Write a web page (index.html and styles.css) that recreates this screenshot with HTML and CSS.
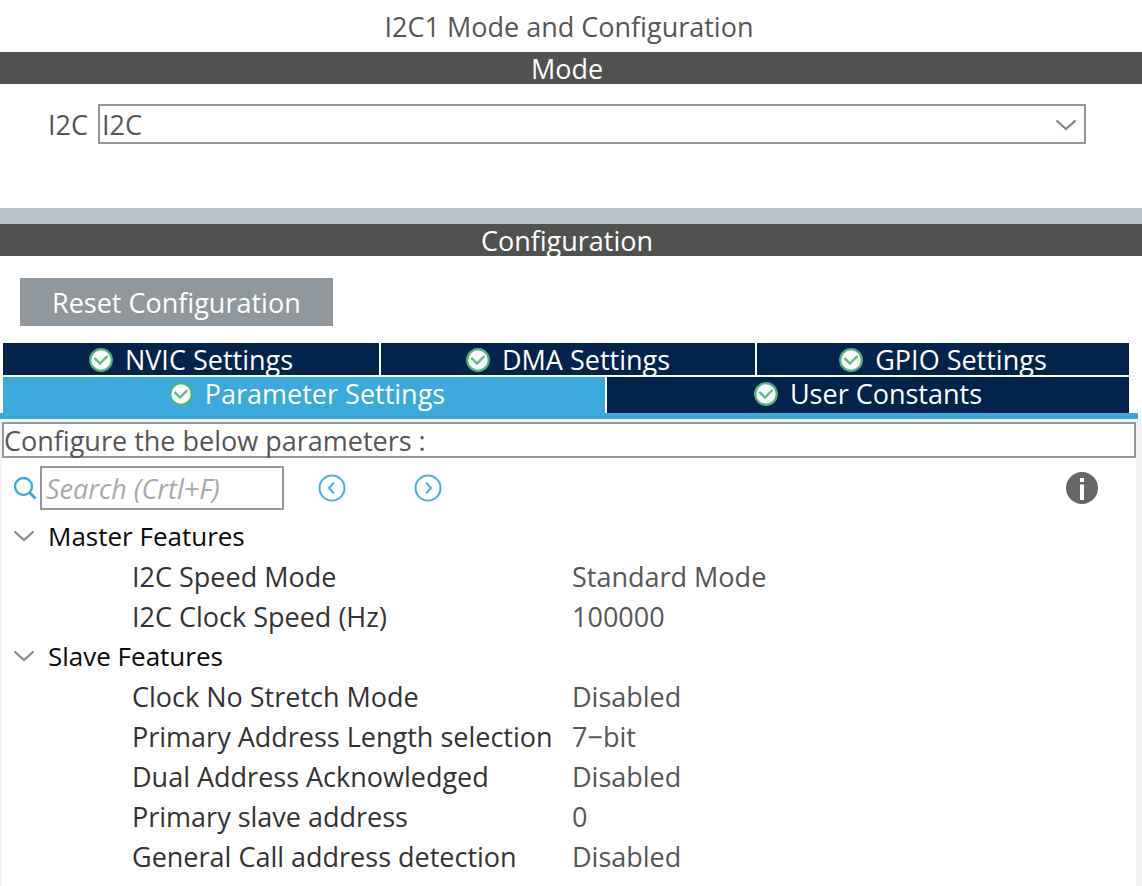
FILE: index.html
```html
<!DOCTYPE html>
<html lang="en">
<head>
<meta charset="utf-8">
<title>I2C1 Mode and Configuration</title>
<link rel="stylesheet" href="styles.css">
</head>
<body>
<svg class="defs" aria-hidden="true">
  <symbol id="check" viewBox="0 0 24 24">
    <circle cx="12" cy="12" r="10.8" fill="#fff" stroke="#4fb477" stroke-width="2.2"/>
    <path d="M5.500 10l5.500 5.500 7.500-7.500" fill="none" stroke="#5cba82" stroke-width="2.4"/>
  </symbol>
  <symbol id="chevron" viewBox="0 0 20 12">
    <path d="M.5 1.500l9.500 8.500 9.500-8.500" fill="none" stroke="#858585" stroke-width="2.2"/>
  </symbol>
</svg>
<h1 class="title">I2C1 Mode and Configuration</h1>
<section>
  <h2 class="bar">Mode</h2>
  <div class="mode">
    <label for="i2c">I2C</label>
    <div class="combo">
      <select id="i2c"><option>I2C</option><option>Disable</option></select>
      <svg class="chevron combo-arrow" aria-hidden="true"><use href="#chevron"/></svg>
    </div>
  </div>
</section>
<div class="splitter"></div>
<section class="configuration">
  <h2 class="bar">Configuration</h2>
  <button class="reset" type="button">Reset Configuration</button>
  <div class="tabs" role="tablist">
    <div class="tab-row tab-row-back">
      <button class="tab" type="button" role="tab"><svg class="check" aria-hidden="true"><use href="#check"/></svg>NVIC Settings</button>
      <button class="tab" type="button" role="tab"><svg class="check" aria-hidden="true"><use href="#check"/></svg>DMA Settings</button>
      <button class="tab" type="button" role="tab"><svg class="check" aria-hidden="true"><use href="#check"/></svg>GPIO Settings</button>
    </div>
    <div class="tab-row tab-row-front">
      <button class="tab active" type="button" role="tab" aria-selected="true"><svg class="check" aria-hidden="true"><use href="#check"/></svg>Parameter Settings</button>
      <button class="tab" type="button" role="tab"><svg class="check" aria-hidden="true"><use href="#check"/></svg>User Constants</button>
    </div>
  </div>
  <div class="strip"></div>
  <div class="panel">
    <p class="hint">Configure the below parameters :</p>
    <div class="toolbar">
      <label class="search-icon" for="search" aria-label="Search">
        <svg viewBox="0 0 24 24"><circle cx="10.500" cy="10.500" r="8.500" fill="none" stroke="#3ba9dc" stroke-width="2.4"/><path d="M16.500 16.500l6 6" stroke="#3ba9dc" stroke-width="3"/></svg>
      </label>
      <input class="search" id="search" type="text" placeholder="Search (Crtl+F)">
      <button class="step" type="button" aria-label="Previous">
        <svg viewBox="0 0 28 28" fill="none" stroke="#45b0e0" stroke-width="2"><circle cx="14" cy="14" r="12.500"/><path d="M16 8.500l-5 5.500 5 5.500"/></svg>
      </button>
      <button class="step" type="button" aria-label="Next">
        <svg viewBox="0 0 28 28" fill="none" stroke="#45b0e0" stroke-width="2"><circle cx="14" cy="14" r="12.500"/><path d="M12 8.500l5 5.500-5 5.500"/></svg>
      </button>
      <button class="info" type="button" aria-label="Information">
        <svg viewBox="0 0 32 32"><circle cx="16" cy="16" r="16" fill="#666"/><path d="M14 6h4v4h-4zM14 12.500h4V28h-4z" fill="#fff"/></svg>
      </button>
    </div>
    <table class="params">
      <tbody>
        <tr><th class="group" colspan="2"><button class="fold" type="button" aria-expanded="true"><svg class="chevron" aria-hidden="true"><use href="#chevron"/></svg>Master Features</button></th></tr>
        <tr><th>I2C Speed Mode</th><td>Standard Mode</td></tr>
        <tr><th>I2C Clock Speed (Hz)</th><td>100000</td></tr>
      </tbody>
      <tbody>
        <tr><th class="group" colspan="2"><button class="fold" type="button" aria-expanded="true"><svg class="chevron" aria-hidden="true"><use href="#chevron"/></svg>Slave Features</button></th></tr>
        <tr><th>Clock No Stretch Mode</th><td>Disabled</td></tr>
        <tr><th>Primary Address Length selection</th><td>7−bit</td></tr>
        <tr><th>Dual Address Acknowledged</th><td>Disabled</td></tr>
        <tr><th>Primary slave address</th><td>0</td></tr>
        <tr><th>General Call address detection</th><td>Disabled</td></tr>
      </tbody>
    </table>
  </div>
</section>
</body>
</html>
```
FILE: styles.css
```css
* { box-sizing: border-box; }
body {
  display: flex;
  flex-direction: column;
  min-height: 100vh;
  margin: 0;
  background: #fff;
  color: #565656;
  font: 27px/32px "Open Sans", "Noto Sans", sans-serif;
}
button, input, select {
  font: inherit;
  color: inherit;
  margin: 0;
  padding: 0;
  border: 0;
  border-radius: 0;
  background: none;
}
svg { display: block; }
.defs { display: none; }
h1, h2, p { margin: 0; font-size: inherit; font-weight: 400; }
.title { padding: 11px 4px 9px 0; text-align: center; }
.bar {
  background: #505250;
  color: #fff;
  padding: 2px 8px 0 0;
  line-height: 30px;
  text-align: center;
}
.mode {
  display: flex;
  align-items: center;
  gap: 10px;
  padding: 20px 56px 64px 48px;
}
.mode label { padding-top: 2px; }
.combo { position: relative; flex: 1; }
.combo select {
  display: block;
  width: 100%;
  height: 40px;
  padding: 2px 40px 0 2px;
  border: 2px solid #90979d;
  appearance: none;
}
.chevron { width: 20px; height: 12px; flex: none; }
.combo-arrow { position: absolute; right: 10px; top: 15px; pointer-events: none; }
.splitter { height: 16px; background: #b8c3ca; }
.configuration { display: flex; flex: 1; flex-direction: column; }
.reset {
  align-self: flex-start;
  margin: 22px 20px 17px;
  padding: 9px 32px 7px;
  background: #90979d;
  color: #fff;
}
.tabs { display: grid; gap: 2px; padding: 0 13px 0 3px; }
.tab-row { display: grid; gap: 2px; }
.tab-row-back { grid-template: 32px / 376fr 374fr 372fr; }
.tab-row-front { grid-template: 36px / 602fr 522fr; }
.tab {
  display: flex;
  align-items: center;
  justify-content: center;
  gap: 12px;
  padding-top: 2px;
  background: #02234b;
  color: #fff;
  line-height: 30px;
  white-space: nowrap;
}
.tab-row-front .tab { padding: 0 0 2px; }
.tab-row-front .active { padding-left: 6px; background: #3ba9dc; }
.check { width: 24px; height: 24px; flex: none; }
.strip { height: 6px; margin-right: 4px; background: #3ba9dc; }
.panel {
  flex: 1;
  border: solid #f0f2f4;
  border-width: 3px 6px 0 2px;
}
.hint { height: 36px; border: 2px solid #90979d; line-height: 34px; }
.toolbar {
  display: flex;
  align-items: center;
  padding: 8px 38px 6px 11px;
}
.search-icon { width: 24px; height: 24px; margin-right: 3px; }
.search {
  width: 244px;
  height: 44px;
  padding: 0 4px;
  border: 2px solid #90979d;
}
.search::placeholder { color: #a8a8a8; font-style: italic; opacity: 1; }
.step { width: 28px; height: 28px; margin-left: 34px; }
.step + .step { margin-left: 68px; }
.info { width: 32px; height: 32px; margin-left: auto; }
.params { width: 100%; border-collapse: collapse; }
.params th, .params td { height: 40px; padding: 2px 0 0; text-align: left; font-weight: 400; white-space: nowrap; }
.params th { width: 570px; padding-left: 130px; color: #333; }
.params .group { width: auto; padding: 0 0 0 12px; }
.fold { display: flex; align-items: center; gap: 14px; color: #0a0a0a; font-size: 26px; }
```
